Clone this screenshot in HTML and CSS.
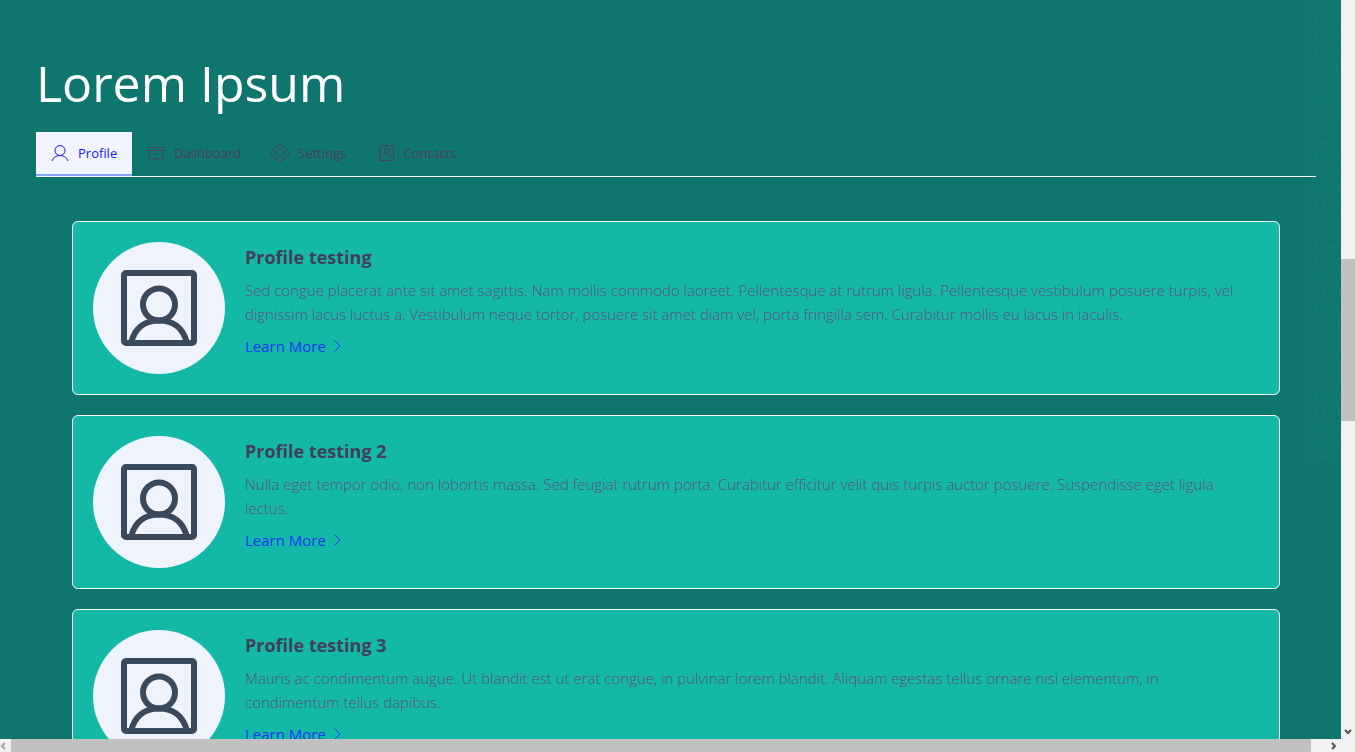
FILE: index.html
```
<!DOCTYPE html>
<html lang="en">
<head>
<meta charset="utf-8">
<title>Lorem Ipsum</title>
<link rel="stylesheet" href="styles.css">
</head>
<body>
<svg class="sprite" aria-hidden="true">
  <symbol id="portrait" viewBox="0 0 78 78">
    <rect x="4" y="4" width="70" height="70" rx="2"/>
    <circle cx="39" cy="35.500" r="16"/>
    <path d="M11 74C15 58 26 51.500 39 51.500S63 58 67 74"/>
  </symbol>
  <symbol id="chevron" viewBox="0 0 16 16"><path d="M4.500 2.500L10 8l-5.500 5.500"/></symbol>
</svg>
<div class="window">
  <main class="page">
    <pre class="ghost-code" aria-hidden="true">b)Ob
func
{if(
f=c+
e[Sy
retu
m("A
ea(t
var
b=u,
func
c.ex
(d=a
{}:c
;var
C.us
{ret
func
1!=b
;fun
func
0:E(
;!E(
(F()
H=Ma
,V:S
(K=h
{thi
M.pr
M.pr
N=u.</pre>
    <h1 class="title">Lorem Ipsum</h1>
    <div class="tabs" role="tablist">
      <button class="tab tab-active" role="tab" aria-selected="true">
        <svg class="tab-icon" viewBox="0 0 18 18"><circle cx="9" cy="6.500" r="5"/><path d="M1 17c1.500-3.800 4.300-5.500 8-5.500s6.500 1.700 8 5.500"/></svg>
        <span>Profile</span>
      </button>
      <button class="tab" role="tab" aria-selected="false">
        <svg class="tab-icon" viewBox="0 0 18 18"><rect x=".5" y="3.500" width="17" height="3" rx=".5"/><path d="M2 6.500v8.500h14V6.500M6.500 10h5"/></svg>
        <span>Dashboard</span>
      </button>
      <button class="tab" role="tab" aria-selected="false">
        <svg class="tab-icon" viewBox="0 0 18 18"><path d="M7.300 1.200 8 .7h2l.7.5.4 1.300 1.200.5 1.500-.6 1.700 1.500-.4 1.700.8 1.300 1.500.7v2.800l-1.500.7-.8 1.300.4 1.700-1.700 1.500-1.500-.6-1.200.5-.4 1.300-.7.500H8l-.7-.5-.4-1.300-1.200-.5-1.500.6-1.700-1.500.4-1.700-.8-1.300-1.500-.7V7.600l1.500-.7.800-1.300-.4-1.700 1.700-1.500 1.500.6 1.200-.5Z"/><circle cx="9" cy="9" r="4"/></svg>
        <span>Settings</span>
      </button>
      <button class="tab" role="tab" aria-selected="false">
        <svg class="tab-icon" viewBox="0 0 18 18"><path d="M3.500 1.500h13v15h-13zM1 3.500h2.500M1 6.500h2.500M1 9.500h2.500M1 12.500h2.500M1 15h2.500"/><circle cx="10" cy="7" r="2.500"/><path d="M6 13.500c.7-2.700 2-4 4-4s3.300 1.300 4 4"/></svg>
        <span>Contacts</span>
      </button>
    </div>
    <div class="cards" role="tabpanel">
      <article class="card">
        <div class="avatar"><svg class="avatar-icon"><use href="#portrait"/></svg></div>
        <div class="card-body">
          <h2 class="card-title">Profile testing</h2>
          <p class="card-text">Sed congue placerat ante sit amet sagittis. Nam mollis commodo laoreet. Pellentesque at rutrum ligula. Pellentesque vestibulum posuere turpis, vel dignissim lacus luctus a. Vestibulum neque tortor, posuere sit amet diam vel, porta fringilla sem. Curabitur mollis eu lacus in iaculis.</p>
          <a class="card-link" href="#more-1">Learn More <svg class="chevron"><use href="#chevron"/></svg></a>
        </div>
      </article>
      <article class="card">
        <div class="avatar"><svg class="avatar-icon"><use href="#portrait"/></svg></div>
        <div class="card-body">
          <h2 class="card-title">Profile testing 2</h2>
          <p class="card-text">Nulla eget tempor odio, non lobortis massa. Sed feugiat rutrum porta. Curabitur efficitur velit quis turpis auctor posuere. Suspendisse eget ligula lectus.</p>
          <a class="card-link" href="#more-2">Learn More <svg class="chevron"><use href="#chevron"/></svg></a>
        </div>
      </article>
      <article class="card">
        <div class="avatar"><svg class="avatar-icon"><use href="#portrait"/></svg></div>
        <div class="card-body">
          <h2 class="card-title">Profile testing 3</h2>
          <p class="card-text">Mauris ac condimentum augue. Ut blandit est ut erat congue, in pulvinar lorem blandit. Aliquam egestas tellus ornare nisi elementum, in condimentum tellus dapibus.</p>
          <a class="card-link" href="#more-3">Learn More <svg class="chevron"><use href="#chevron"/></svg></a>
        </div>
      </article>
    </div>
  </main>
  <div class="vbar"><span class="vthumb"></span><svg class="arrow-down" viewBox="0 0 8 6"><path d="M1 1l3 3 3-3"/></svg></div>
  <div class="hbar"><svg class="arrow-side arrow-off" viewBox="0 0 6 8"><path d="M5 1L2 4l3 3"/></svg><span class="hthumb"></span><svg class="arrow-side" viewBox="0 0 6 8"><path d="M1 1l3 3-3 3"/></svg></div>
</div>
</body>
</html>
```
FILE: styles.css
```
* { box-sizing: border-box; }
body { margin: 0; font-family: "Open Sans", "Noto Sans", sans-serif; }
h1, h2, p { margin: 0; }
.sprite { display: none; }
.window { display: grid; grid-template: minmax(0, 1fr) 13px / minmax(0, 1fr) 14px; height: 100vh; overflow: hidden; }
.page { position: relative; overflow: hidden; padding: 48px 25px 0 36px; background: #0f766e; }
.ghost-code { position: absolute; top: 0; right: 0; width: 36px; margin: 0; padding-left: 8px; overflow: hidden; background: #10776e; color: #137d71; font: 12px/15px "DejaVu Sans Mono", monospace; }
.title { color: #fff; font-size: 50px; font-weight: 400; line-height: 70px; }
.tabs { position: relative; display: flex; margin-top: 14px; border-bottom: 1px solid #fff; }
.tab { display: flex; align-items: center; gap: 9px; height: 44px; padding: 0 15px; border: 0; border-bottom: 2px solid transparent; background: none; color: #4a3f5f; font: 500 13px/20px "Open Sans", "Noto Sans", sans-serif; }
.tab-active { background: #f1f4ff; border-bottom-color: #87a4fb; color: #1717f5; }
.tab-icon { width: 18px; height: 18px; fill: none; stroke: currentColor; stroke-width: 1; }
.cards { display: grid; gap: 20px; padding: 44px 36px; }
.card { display: flex; gap: 20px; padding: 20px; border: 1px solid #fff; border-radius: 6px; background: #14b8a6; }
.avatar { display: grid; place-items: center; flex: none; width: 132px; height: 132px; border-radius: 50%; background: #eff3fb; }
.avatar-icon { width: 78px; height: 78px; fill: none; stroke: #3b495d; stroke-width: 6; }
.card-title { color: #40405a; font-size: 18px; font-weight: 700; line-height: 28px; margin-top: 1px; }
.card-text { margin-top: 7px; padding-right: 12px; color: #5c4f82; font-size: 15px; font-weight: 300; line-height: 24px; }
.card-link { display: inline-flex; align-items: center; gap: 4px; margin-top: 8px; color: #1b35f2; font-size: 15px; font-weight: 500; line-height: 24px; text-decoration: none; }
.chevron { width: 16px; height: 16px; fill: none; stroke: currentColor; }
.vbar { position: relative; background: #f1f1f1; }
.vthumb { position: absolute; top: 35%; left: 0; width: 100%; height: 22%; background: #c1c1c1; }
.arrow-down { position: absolute; right: 3px; bottom: 4px; width: 8px; height: 6px; fill: none; stroke: #505050; stroke-width: 2; }
.hbar { grid-column: 1 / -1; display: flex; align-items: center; padding: 0 18px 0 0; background: #f1f1f1; }
.hthumb { flex: 1; align-self: stretch; margin-right: 20px; background: #c1c1c1; }
.arrow-side { width: 6px; height: 8px; fill: none; stroke: #505050; stroke-width: 2; }
.arrow-off { margin: 0 5px 0 0; stroke: #a3a3a3; }
```
